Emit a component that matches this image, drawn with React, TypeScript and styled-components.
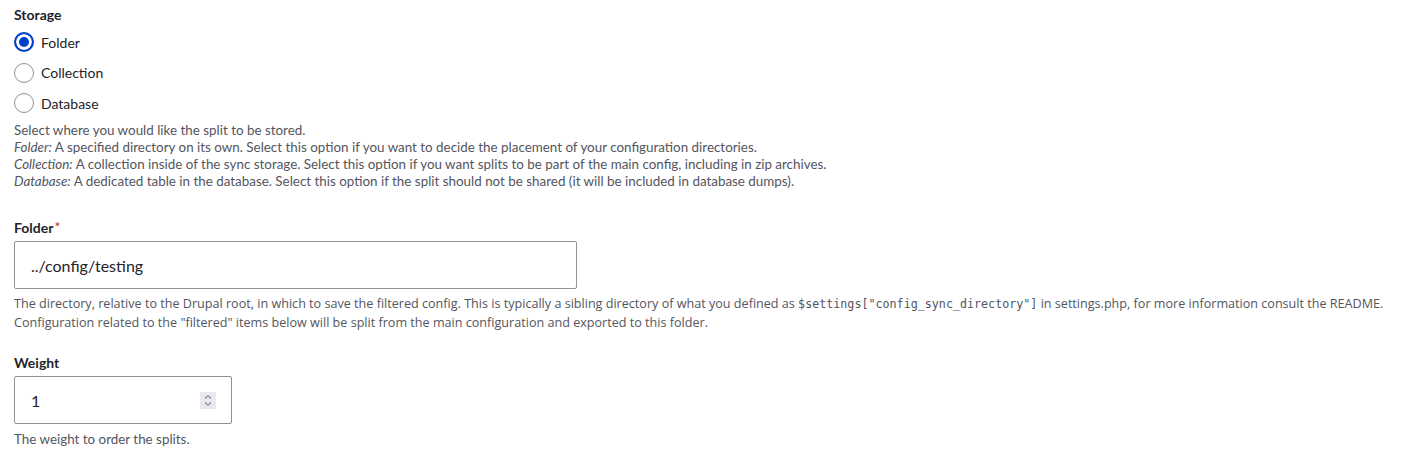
import React from "react";
import styled, { createGlobalStyle } from "styled-components";

const Global = createGlobalStyle`
  html, body { margin: 0; padding: 0; background: #fff; }
  body { font-family: "Lato", "Liberation Sans", sans-serif; color: #232429; }
  * { box-sizing: border-box; }
`;

const Page = styled.div`
  padding: 6px 14px 0 14px;
  display: flex;
  flex-direction: column;
`;

const Fieldset = styled.div<{ $mt?: number }>`
  display: flex;
  flex-direction: column;
  margin-top: ${(p) => p.$mt ?? 0}px;
`;

const Label = styled.div`
  font-size: 14px;
  font-weight: 700;
  line-height: 18px;
  color: #232429;
`;

const Required = styled.span`
  color: #dc2323;
  margin-left: 1px;
  font-weight: 400;
  font-size: 14px;
  vertical-align: top;
  line-height: 16px;
`;

const RadioList = styled.div`
  display: flex;
  flex-direction: column;
  gap: 10.5px;
  margin-top: 8px;
`;

const RadioRow = styled.label`
  display: flex;
  align-items: center;
  gap: 7px;
  height: 20px;
  font-size: 14px;
  color: #232429;
`;

const RadioInput = styled.input`
  appearance: none;
  margin: 0;
  width: 20px;
  height: 20px;
  border-radius: 50%;
  border: 1px solid #8e929c;
  background: #fff;
  &:checked {
    border: 2px solid #003ecc;
    box-shadow: inset 0 0 0 3px #fff;
    background: #003ecc;
  }
`;

const Description = styled.div<{ $mt?: number }>`
  font-size: 13.4px;
  line-height: 17px;
  color: #545560;
  margin-top: ${(p) => p.$mt ?? 0}px;
`;

const Condensed = styled.div`
  font-size: 12.6px;
  line-height: 19px;
  color: #545560;
  margin-top: 5px;
  font-family: "Open Sans", "Liberation Sans", sans-serif;
  font-stretch: 90%;
  white-space: nowrap;
`;

const Code = styled.code`
  font-family: "DejaVu Sans Mono", monospace;
  font-size: 11.7px;
  line-height: 0;
  font-stretch: 100%;
`;

const TextBox = styled.div<{ $width: number }>`
  width: ${(p) => p.$width}px;
  height: 48px;
  margin-top: 4px;
  border: 1px solid #8e929c;
  border-radius: 2px;
  display: flex;
  align-items: center;
  padding: 0 15px 0 16px;
`;

const TextInput = styled.input`
  flex: 1;
  min-width: 0;
  border: 0;
  outline: none;
  padding: 0;
  font-family: inherit;
  font-size: 16px;
  color: #232429;
  background: transparent;
`;

const Spinner = styled.div`
  width: 16px;
  height: 17px;
  background: #e9e9ed;
  display: flex;
  align-items: center;
  justify-content: center;
`;

const Italic = styled.em`
  font-style: italic;
`;

export default function App() {
  return (
    <>
      <Global />
      <Page>
        <Fieldset>
          <Label>Storage</Label>
          <RadioList>
            <RadioRow>
              <RadioInput type="radio" name="storage" defaultChecked />
              Folder
            </RadioRow>
            <RadioRow>
              <RadioInput type="radio" name="storage" />
              Collection
            </RadioRow>
            <RadioRow>
              <RadioInput type="radio" name="storage" />
              Database
            </RadioRow>
          </RadioList>
          <Description $mt={9}>
            Select where you would like the split to be stored.
            <br />
            <Italic>Folder:</Italic> A specified directory on its own. Select this option if you want to decide the placement of your configuration directories.
            <br />
            <Italic>Collection:</Italic> A collection inside of the sync storage. Select this option if you want splits to be part of the main config, including in zip archives.
            <br />
            <Italic>Database:</Italic> A dedicated table in the database. Select this option if the split should not be shared (it will be included in database dumps).
          </Description>
        </Fieldset>

        <Fieldset $mt={29}>
          <Label>
            Folder<Required>*</Required>
          </Label>
          <TextBox $width={563}>
            <TextInput defaultValue="../config/testing" />
          </TextBox>
          <Condensed>
            The directory, relative to the Drupal root, in which to save the filtered config. This is typically a sibling directory of what you defined as{" "}
            <Code>$settings["config_sync_directory"]</Code> in settings.php, for more information consult the README.
            <br />
            Configuration related to the "filtered" items below will be split from the main configuration and exported to this folder.
          </Condensed>
        </Fieldset>

        <Fieldset $mt={22}>
          <Label>Weight</Label>
          <TextBox $width={218}>
            <TextInput defaultValue="1" />
            <Spinner>
              <svg width="10" height="13" viewBox="0 0 10 13" fill="none" stroke="#8a8a96" strokeWidth="1.2">
                <path d="M2 4.5 L5 1.8 L8 4.5" />
                <path d="M2 8.5 L5 11.2 L8 8.5" />
              </svg>
            </Spinner>
          </TextBox>
          <Description $mt={7}>The weight to order the splits.</Description>
        </Fieldset>
      </Page>
    </>
  );
}
